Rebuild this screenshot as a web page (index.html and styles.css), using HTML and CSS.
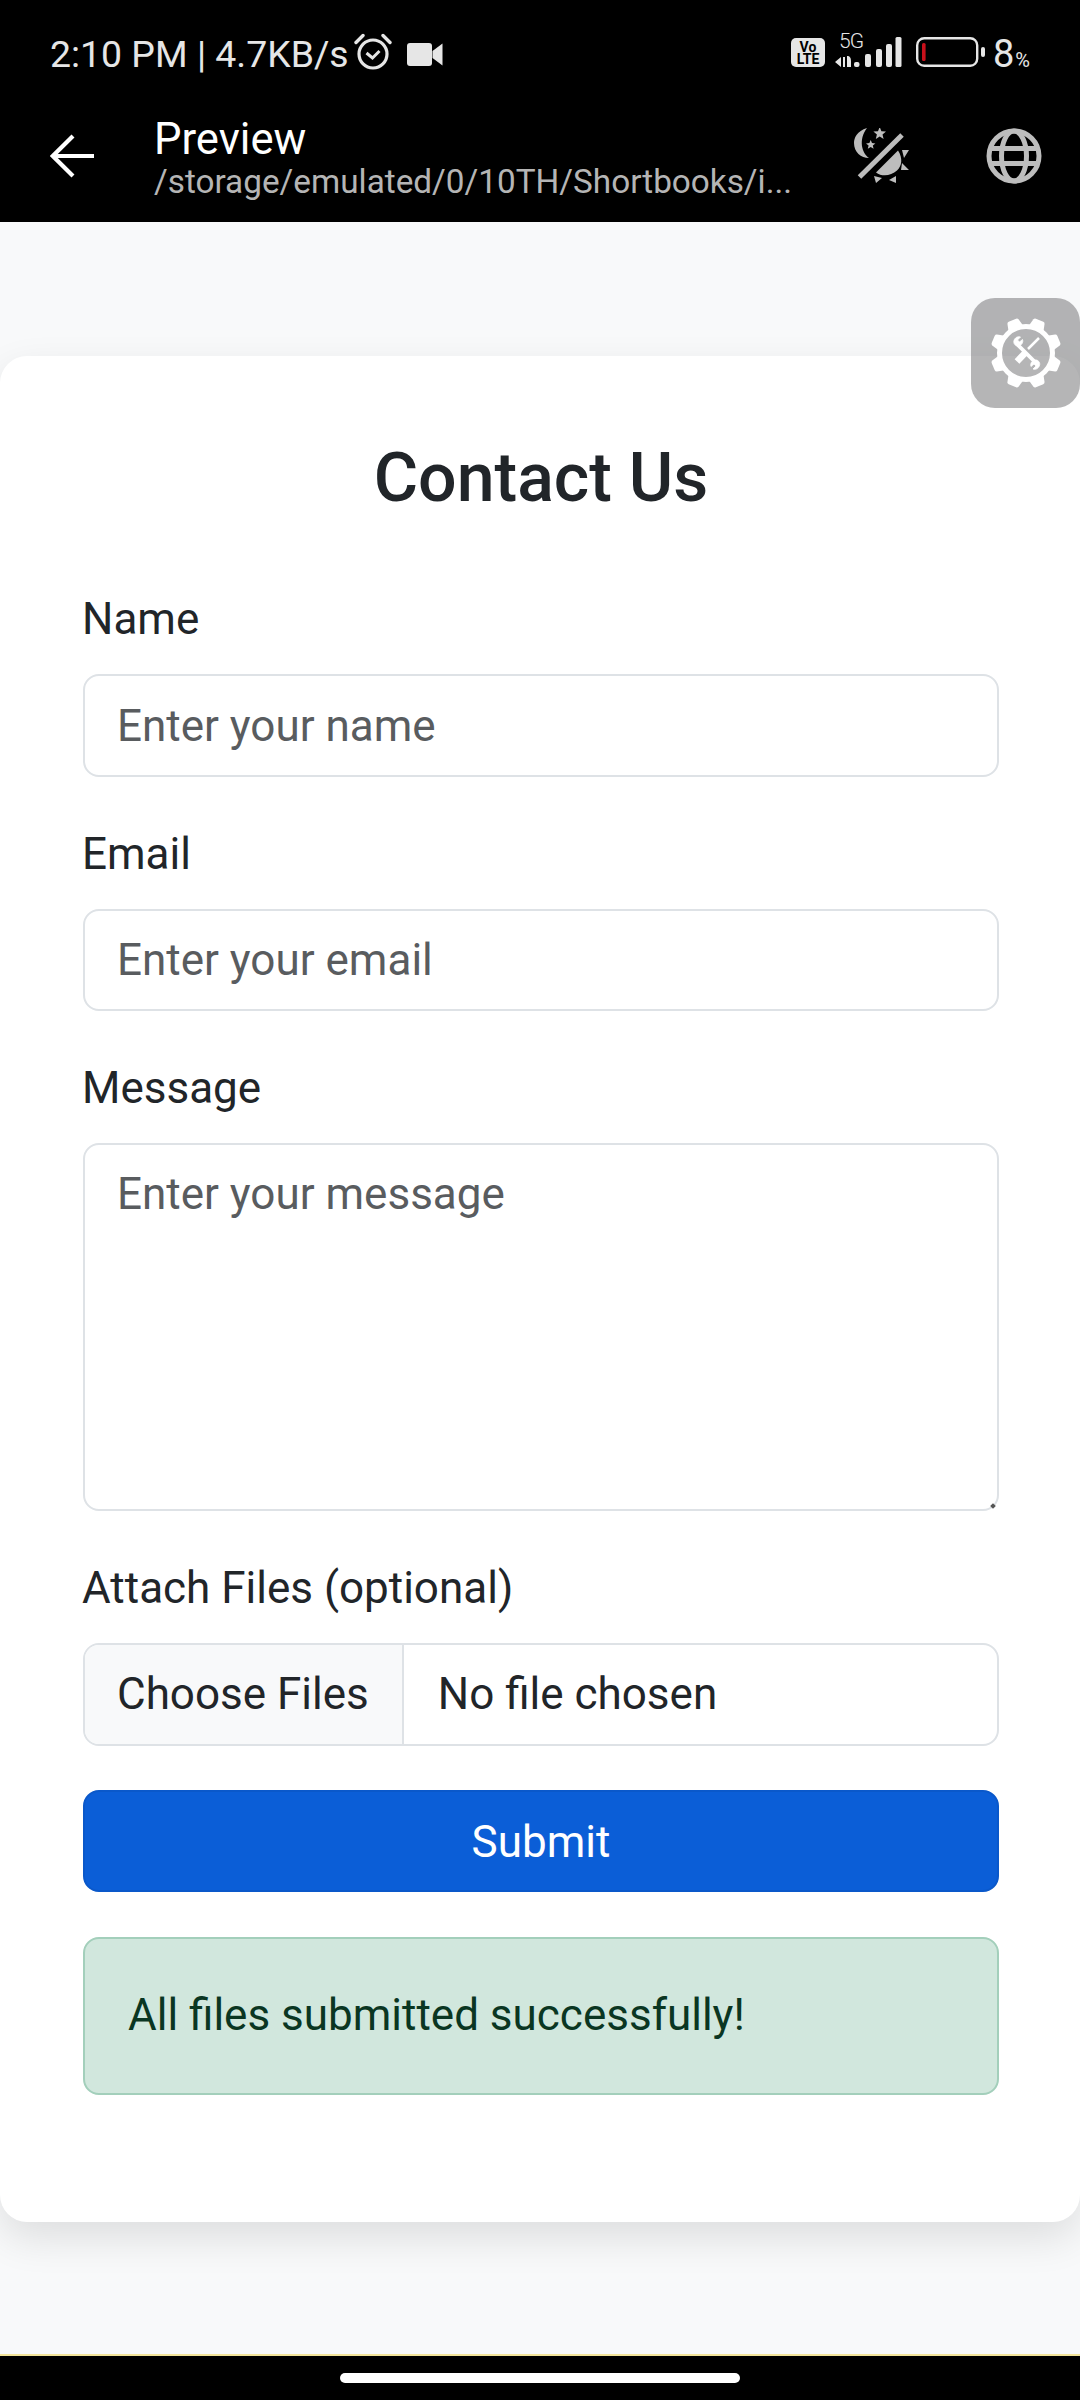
FILE: index.html
```html
<!DOCTYPE html>
<html lang="en">
<head>
<meta charset="utf-8">
<title>Contact Us</title>
<link rel="stylesheet" href="styles.css">
</head>
<body>
<div class="app">
  <header class="top">
    <div class="status">
      <span class="status-text">2:10 PM | 4.7KB/s</span>
      <svg class="ic-alarm" viewBox="0 0 38 38" width="38" height="38">
        <circle cx="19" cy="21" r="14" fill="none" stroke="#e6e6e6" stroke-width="3.2"/>
        <path d="M12.500 21l6 5 7-7" fill="none" stroke="#e6e6e6" stroke-width="3" transform="translate(0 -1)"/>
        <path d="M2 9.500 9 2.500M36 9.500 29 2.500" fill="none" stroke="#e6e6e6" stroke-width="3.400" stroke-linecap="round"/>
      </svg>
      <svg class="ic-cam" viewBox="0 0 36 23" width="36" height="23">
        <rect x="0" y="0" width="25" height="23" rx="3" fill="#e6e6e6"/>
        <path d="M25.500 8 35.500 0.500V22.500L25.500 15Z" fill="#e6e6e6"/>
      </svg>
      <div class="status-right">
        <span class="volte"><span>Vo</span><span>LTE</span></span>
        <span class="signal">
          <span class="fiveg">5G</span>
          <svg viewBox="0 0 67 30" width="67" height="30">
            <path d="M0 25 6 20V30ZM8 20H10V30H8ZM12 19C15 19 16 21 16 24V30H12Z" fill="#e6e6e6"/>
            <rect x="19" y="25" width="5.500" height="5" rx="2" fill="#e6e6e6"/>
            <rect x="30" y="17" width="6" height="13" rx="2" fill="#e6e6e6"/>
            <rect x="41" y="12" width="6" height="18" rx="2" fill="#e6e6e6"/>
            <rect x="51" y="7" width="6" height="23" rx="2" fill="#e6e6e6"/>
            <rect x="60.500" y="0" width="6" height="30" rx="1.500" fill="#e6e6e6"/>
          </svg>
        </span>
        <svg class="ic-batt" viewBox="0 0 69 30" width="69" height="30">
          <rect x="1.200" y="1.200" width="60" height="27.600" rx="7" fill="none" stroke="#e6e6e6" stroke-width="2.400"/>
          <rect x="6" y="6" width="3.600" height="18" rx="1.500" fill="#c8101a"/>
          <rect x="65" y="10" width="4" height="10" rx="2" fill="#e6e6e6"/>
        </svg>
        <span class="batt-num">8<small>%</small></span>
      </div>
    </div>
    <div class="appbar">
      <svg class="ic-back" viewBox="0 0 44 44" width="44" height="44">
        <path d="M44 22H3M23 2 2.800 22 23 42" fill="none" stroke="#fff" stroke-width="4.200"/>
      </svg>
      <div class="titles">
        <div class="title">Preview</div>
        <div class="path">/storage/emulated/0/10TH/Shortbooks/i...</div>
      </div>
      <svg class="ic-theme" viewBox="0 0 56 56" width="56" height="56">
        <path d="M13 0C3 3 0 10 0 15C0 24 7 30 15 30C8 25 4 12 13 0Z" fill="#bdbdbd"/>
        <path d="M25.700-1l1.700 4.300 4.600.3-3.500 2.900 1.100 4.500-3.900-2.500-3.900 2.500 1.100-4.500-3.500-2.900 4.600-.3Z" fill="#bdbdbd"/>
        <path d="M16.700 12l1.300 3.100 3.400.3-2.600 2.100.8 3.300-2.900-1.800-2.900 1.800.8-3.300-2.600-2.100 3.400-.3Z" fill="#bdbdbd"/>
        <path d="M5.500 49 48 7" stroke="#bdbdbd" stroke-width="5" fill="none"/>
        <path d="M22 44.500 44 22.500C49 30 48 38 43 42.500C37 48 28 49 22 44.500Z" fill="#bdbdbd"/>
        <path d="M48 22H55L50 30ZM48 35 55 42H47ZM42 48V55L35 52ZM20 48 28 50 22 55Z" fill="#bdbdbd"/>
      </svg>
      <svg class="ic-globe" viewBox="0 0 56 56" width="56" height="56">
        <g fill="none" stroke="#bdbdbd" stroke-width="5">
          <circle cx="28" cy="28" r="25"/>
          <path d="M5 20.500H51M5 35.500H51"/>
          <ellipse cx="28" cy="28" rx="12.500" ry="25"/>
        </g>
      </svg>
    </div>
  </header>

  <main class="content">
    <section class="card">
      <h1 class="heading">Contact Us</h1>
      <form class="form">
        <div class="field">
          <label class="label" for="name">Name</label>
          <input class="control" id="name" type="text" placeholder="Enter your name">
        </div>
        <div class="field">
          <label class="label" for="email">Email</label>
          <input class="control" id="email" type="email" placeholder="Enter your email">
        </div>
        <div class="field area-field">
          <label class="label" for="message">Message</label>
          <textarea class="control area" id="message" placeholder="Enter your message"></textarea>
          <span class="grip"></span>
        </div>
        <div class="field file-field">
          <label class="label" for="files">Attach Files (optional)</label>
          <div class="file control" id="files">
            <span class="file-btn">Choose Files</span>
            <span class="file-name">No file chosen</span>
          </div>
        </div>
        <button class="submit" type="button">Submit</button>
      </form>
      <div class="alert">All files submitted successfully!</div>
    </section>
    <div class="tool">
      <svg viewBox="0 0 72 72" width="72" height="72">
        <g fill="#fff" transform="rotate(22.500 36 36)">
          <path d="M28 10 30 2Q30.500 .5 32 .5H40Q41.500 .5 42 2L44 10Z"/>
          <path d="M28 10 30 2Q30.500 .5 32 .5H40Q41.500 .5 42 2L44 10Z" transform="rotate(45 36 36)"/>
          <path d="M28 10 30 2Q30.500 .5 32 .5H40Q41.500 .5 42 2L44 10Z" transform="rotate(90 36 36)"/>
          <path d="M28 10 30 2Q30.500 .5 32 .5H40Q41.500 .5 42 2L44 10Z" transform="rotate(135 36 36)"/>
          <path d="M28 10 30 2Q30.500 .5 32 .5H40Q41.500 .5 42 2L44 10Z" transform="rotate(180 36 36)"/>
          <path d="M28 10 30 2Q30.500 .5 32 .5H40Q41.500 .5 42 2L44 10Z" transform="rotate(225 36 36)"/>
          <path d="M28 10 30 2Q30.500 .5 32 .5H40Q41.500 .5 42 2L44 10Z" transform="rotate(270 36 36)"/>
          <path d="M28 10 30 2Q30.500 .5 32 .5H40Q41.500 .5 42 2L44 10Z" transform="rotate(315 36 36)"/>
        </g>
        <circle cx="36" cy="36" r="26.500" fill="none" stroke="#fff" stroke-width="5"/>
        <g fill="none" stroke="#fff">
          <path d="M27 27 46 46" stroke-width="3.800"/>
          <path d="M24 23.500c1-3 4-4.500 6.500-3.500l-3 3 2 2 3-2.500c1 3-1 6-4 6.500-3 .5-5.500-2.500-4.500-5.500Z" stroke-width=".8" fill="#fff"/>
          <path d="M49.500 48.500c-1 3-4 4.500-6.500 3.500l3-3-2-2-3 2.500c-1-3 1-6 4-6.500 3-.5 5.500 2.500 4.500 5.500Z" stroke-width=".8" fill="#fff"/>
          <path d="M49 21 38 32" stroke-width="2.500"/>
          <path d="M36 35 27 44.500" stroke-width="6.500"/>
        </g>
      </svg>
    </div>
  </main>

  <footer class="nav"><span class="pill"></span></footer>
</div>
</body>
</html>
```
FILE: styles.css
```css
* { box-sizing: border-box; }
html, body { margin: 0; padding: 0; }
body { font-family: Roboto, "Liberation Sans", sans-serif; background: #000; }

.app { width: 1080px; height: 2400px; display: flex; flex-direction: column; overflow: hidden; }

.top { background: #000; height: 222px; flex: none; }
.status { height: 90px; padding: 18px 50px 0 50px; display: flex; align-items: center; color: #e6e6e6; }
.status-text { font-size: 37.400px; margin-right: 5px; white-space: nowrap; }
.ic-alarm { margin-top: -4px; }
.ic-cam { margin-left: 15px; margin-top: 1px; }
.status-right { margin-left: auto; margin-top: -4px; display: flex; align-items: flex-end; height: 30px; }
.volte { width: 34px; height: 29px; background: #e6e6e6; border-radius: 5px; color: #000; font-size: 14px; font-weight: 700; line-height: 12px; display: flex; flex-direction: column; align-items: center; justify-content: center; }
.signal { position: relative; width: 67px; height: 30px; margin-left: 10px; display: block; }
.fiveg { position: absolute; left: 4px; top: -6px; font-size: 21px; line-height: 21px; letter-spacing: -1px; font-weight: 300; }
.signal svg { display: block; }
.ic-batt { margin-left: 14px; display: block; }
.batt-num { font-size: 38px; line-height: 30px; height: 30px; padding-top: 2px; margin-left: 8px; display: block; }
.batt-num small { font-size: 20px; margin-left: 1px; }

.appbar { height: 132px; padding: 0 38px 0 50px; display: flex; align-items: center; }
.titles { margin-left: 60px; margin-top: 3px; width: 390px; }
.title { font-size: 43.600px; line-height: 48px; color: #fff; }
.path { font-size: 33.300px; line-height: 36px; color: #b5b5b5; white-space: nowrap; }
.ic-theme { margin-left: auto; }
.ic-globe { margin-left: 76px; }

.content { position: relative; flex: 1; background: #f8f9fa; padding-top: 134px; }
.card { background: #fff; border-radius: 27px; height: 1866px; padding: 82px 81px 0 83px; box-shadow: 0 16px 40px rgba(0, 0, 0, .11); }
.heading { margin: 0 0 68px; text-align: center; font-size: 68px; line-height: 81px; font-weight: 500; color: #212529; }
.form { display: flex; flex-direction: column; }
.field { margin-bottom: 45px; display: flex; flex-direction: column; }
.file-field { margin-bottom: 44px; }
.area-field { position: relative; }
.label { font-size: 44px; line-height: 65px; color: #212529; margin-bottom: 22px; margin-left: -1px; }
.control { display: block; width: 100%; height: 102.600px; padding: 17px 33px 16px 32px; font: 400 44px/65px Roboto, sans-serif; color: #212529; background: #fff; border: 2.700px solid #dee2e6; border-radius: 16px; outline: 0; }
.control::placeholder { color: #595c5f; opacity: 1; }
.area { height: 368px; resize: none; }
.grip { position: absolute; right: 4px; bottom: 3px; width: 4px; height: 4px; background: #555; transform: rotate(45deg); }
.file { display: flex; padding: 0; overflow: hidden; align-items: stretch; }
.file-btn { background: #f8f9fa; border-right: 2.700px solid #dee2e6; padding: 17px 33px 15px 32px; line-height: 65px; white-space: nowrap; }
.file-name { padding: 17px 34px 15px; line-height: 65px; }
.submit { height: 102.600px; font: 400 44px/65px Roboto, sans-serif; color: #fff; background: #0b5ed7; border: 2.700px solid #0a58ca; border-radius: 16px; padding: 2px 0 0; width: 100%; }
.alert { margin-top: 45px; height: 158px; background: #d1e7dd; border: 2.700px solid #a3cfbb; border-radius: 16px; color: #0a3622; font-size: 44px; line-height: 65px; padding: 44px 43px 0; }

.tool { position: absolute; right: 0; top: 76px; width: 109px; height: 110px; background: rgba(120, 120, 122, .55); border-radius: 24px; display: flex; align-items: center; justify-content: center; }

.nav { height: 46px; flex: none; background: #000; border-top: 2px solid #f3e59a; display: flex; justify-content: center; padding-top: 17px; }
.pill { width: 400px; height: 10px; background: #fff; border-radius: 5px; }
```
